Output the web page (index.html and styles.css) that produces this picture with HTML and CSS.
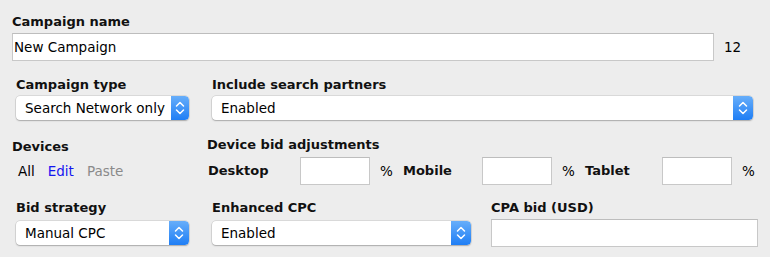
FILE: index.html
```html
<!DOCTYPE html>
<html>
<head>
<meta charset="utf-8">
<link rel="stylesheet" href="styles.css">
</head>
<body>
<div class="form">
  <div class="row-name">
    <div class="lbl">Campaign name</div>
    <div class="name-line">
      <div class="input name-input">New Campaign</div>
      <span class="count">12</span>
    </div>
  </div>

  <div class="row row-type">
    <div class="field f-type">
      <div class="lbl">Campaign type</div>
      <div class="select s-type"><span class="sel-text">Search Network only</span><span class="sel-btn"><svg width="18" height="24" viewBox="0 0 18 24"><path d="M5.5 10 L9 6.5 L12.5 10 M5.5 14 L9 17.5 L12.5 14" fill="none" stroke="#fff" stroke-width="1.5" stroke-linecap="round" stroke-linejoin="round"/></svg></span></div>
    </div>
    <div class="field f-partners">
      <div class="lbl">Include search partners</div>
      <div class="select s-partners"><span class="sel-text">Enabled</span><span class="sel-btn wide"><svg width="20" height="24" viewBox="0 0 20 24"><path d="M6.5 10 L10 6.5 L13.5 10 M6.5 14 L10 17.5 L13.5 14" fill="none" stroke="#fff" stroke-width="1.5" stroke-linecap="round" stroke-linejoin="round"/></svg></span></div>
    </div>
  </div>

  <div class="row row-devices">
    <div class="field f-devices">
      <div class="lbl">Devices</div>
      <div class="links">
        <span class="link-all">All</span>
        <span class="link-edit">Edit</span>
        <span class="link-paste">Paste</span>
      </div>
    </div>
    <div class="field f-adjust">
      <div class="lbl">Device bid adjustments</div>
      <div class="adjust-line">
        <span class="lbl dev dev-desktop">Desktop</span>
        <div class="input small-input"></div>
        <span class="pct">%</span>
        <span class="lbl dev dev-mobile">Mobile</span>
        <div class="input small-input"></div>
        <span class="pct">%</span>
        <span class="lbl dev dev-tablet">Tablet</span>
        <div class="input small-input"></div>
        <span class="pct">%</span>
      </div>
    </div>
  </div>

  <div class="row row-bid">
    <div class="field f-type">
      <div class="lbl">Bid strategy</div>
      <div class="select s-type s-low"><span class="sel-text">Manual CPC</span><span class="sel-btn wide"><svg width="20" height="24" viewBox="0 0 20 24"><path d="M6.5 10 L10 6.5 L13.5 10 M6.5 14 L10 17.5 L13.5 14" fill="none" stroke="#fff" stroke-width="1.5" stroke-linecap="round" stroke-linejoin="round"/></svg></span></div>
    </div>
    <div class="field f-ecpc">
      <div class="lbl">Enhanced CPC</div>
      <div class="select s-ecpc s-low"><span class="sel-text">Enabled</span><span class="sel-btn wide"><svg width="20" height="24" viewBox="0 0 20 24"><path d="M6.5 10 L10 6.5 L13.5 10 M6.5 14 L10 17.5 L13.5 14" fill="none" stroke="#fff" stroke-width="1.5" stroke-linecap="round" stroke-linejoin="round"/></svg></span></div>
    </div>
    <div class="field f-cpa">
      <div class="lbl">CPA bid (USD)</div>
      <div class="input cpa-input"></div>
    </div>
  </div>
</div>
</body>
</html>
```

FILE: styles.css
```css
html, body {
  margin: 0;
  padding: 0;
  background: #ededed;
}
body {
  font-family: "DejaVu Sans", "Liberation Sans", sans-serif;
  font-size: 13.5px;
  color: #000;
  width: 770px;
  height: 257px;
  overflow: hidden;
}
.form {
  padding: 14px 0 0 12px;
}
.lbl {
  font-size: 13px;
  font-weight: bold;
  line-height: 16px;
  white-space: nowrap;
  color: #111;
}
.input {
  box-sizing: border-box;
  height: 28px;
  background: #fff;
  border: 1px solid #c8c8c8;
  border-top-color: #bdbdbd;
}
.name-line {
  display: flex;
  align-items: center;
  margin-top: 3px;
}
.name-input {
  width: 702px;
  padding: 1px 0 0 1px;
  line-height: 25px;
}
.count {
  margin-left: 10px;
}
.row {
  display: flex;
}
.row-type {
  margin-top: 16px;
  padding-left: 4px;
}
.field {
  display: flex;
  flex-direction: column;
}
.f-type {
  width: 173px;
}
.f-partners {
  margin-left: 23px;
}
.select {
  box-sizing: border-box;
  display: flex;
  height: 24px;
  margin-top: 3px;
  background: #fff;
  border-radius: 4px;
  box-shadow: 0 0 0 0.5px rgba(0, 0, 0, 0.16), 0 1px 1.5px rgba(0, 0, 0, 0.22);
  overflow: hidden;
}
.s-low {
  margin-top: 5px;
}
.s-type {
  width: 173px;
}
.s-partners {
  width: 541px;
}
.s-ecpc {
  width: 259px;
}
.sel-text {
  flex: 1;
  min-width: 0;
  padding-left: 9px;
  line-height: 24px;
  white-space: nowrap;
  overflow: hidden;
}
.sel-btn {
  flex: none;
  width: 18px;
  height: 24px;
  background: linear-gradient(#67aefa, #1f7ef5);
  border-radius: 0 4px 4px 0;
}
.sel-btn.wide {
  width: 20px;
}
.sel-btn svg {
  display: block;
}
.row-devices {
  margin-top: 17px;
}
.f-devices {
  width: 195px;
  padding-top: 2px;
}
.links {
  display: flex;
  align-items: center;
  gap: 13px;
  height: 28px;
  margin-top: 2px;
  padding-left: 6px;
}
.link-edit {
  color: #1515f0;
}
.link-paste {
  color: #8a8a8a;
}
.adjust-line {
  display: flex;
  align-items: center;
  margin-top: 4px;
}
.dev {
  padding-left: 1px;
}
.dev-desktop {
  width: 92px;
}
.dev-mobile {
  width: 79px;
}
.dev-tablet {
  width: 77px;
}
.small-input {
  width: 70px;
}
.pct {
  width: 22px;
  padding-left: 10px;
}
.row-bid {
  margin-top: 15px;
  padding-left: 4px;
}
.f-ecpc {
  margin-left: 23px;
}
.f-cpa {
  margin-left: 20px;
}
.cpa-input {
  width: 267px;
  margin-top: 3px;
}
```
